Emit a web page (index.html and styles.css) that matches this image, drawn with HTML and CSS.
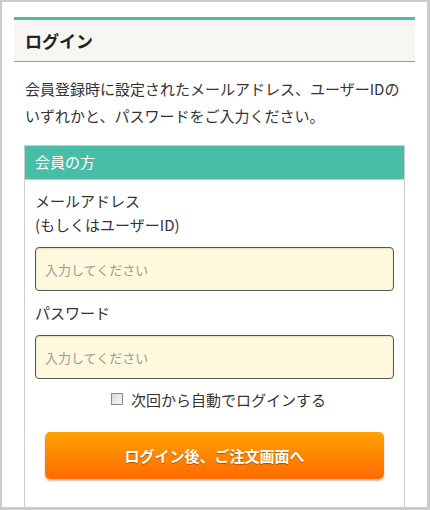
FILE: index.html
```html
<!DOCTYPE html>
<html lang="ja">
<head>
<meta charset="utf-8">
<link rel="stylesheet" href="styles.css">
</head>
<body>
<div class="frame">
  <section class="login">
    <h2 class="title">ログイン</h2>
    <p class="intro">会員登録時に設定されたメールアドレス、ユーザーIDのいずれかと、パスワードをご入力ください。</p>
    <div class="box">
      <div class="box-head">会員の方</div>
      <div class="box-body">
        <label class="label">メールアドレス<br>(もしくはユーザーID)</label>
        <input class="field" type="text" placeholder="入力してください">
        <label class="label">パスワード</label>
        <input class="field" type="password" placeholder="入力してください">
        <div class="remember"><span class="check"></span><span>次回から自動でログインする</span></div>
        <button class="btn" type="button">ログイン後、ご注文画面へ</button>
      </div>
    </div>
  </section>
</div>
</body>
</html>
```
FILE: styles.css
```css
html, body { margin: 0; padding: 0; background: #fff; }
body { font-family: "Noto Sans CJK JP", "Noto Sans", sans-serif; color: #333; }
.frame {
  box-sizing: border-box;
  width: 430px;
  height: 510px;
  border: 2px solid #cccccc;
  border-right-width: 3px;
  border-bottom-width: 3px;
  padding: 15px 12px 0 12px;
  overflow: hidden;
}
.title {
  margin: 0;
  border-top: 3px solid #48bea6;
  border-bottom: 1px solid #999;
  background: #f7f6f2;
  font-size: 17px;
  font-weight: bold;
  color: #222;
  height: 41px;
  line-height: 42px;
  padding: 0 11px;
}
.intro {
  margin: 13px 0 0 0;
  padding: 0 11px;
  font-size: 15px;
  line-height: 27px;
  color: #333;
}
.box {
  margin: 16px 10px 0 10px;
  border: 1px solid #cccccc;
  border-bottom: none;
}
.box-head {
  background: #48bea6;
  color: #fff;
  font-size: 15px;
  height: 33px;
  line-height: 31px;
  padding: 0 10px;
  border-bottom: 1px solid #cccccc;
}
.box-body {
  padding: 9px 10px 30px 10px;
  display: flex;
  flex-direction: column;
}
.label {
  font-size: 15px;
  line-height: 24px;
  color: #333;
  margin-bottom: 10px;
}
.field {
  box-sizing: border-box;
  height: 44px;
  width: 100%;
  background: #fef9dc;
  border: 1px solid #555;
  border-radius: 4px;
  box-shadow: inset 0 1px 2px rgba(0,0,0,0.12);
  padding: 0 9px;
  font-family: "Noto Sans CJK JP", sans-serif;
  font-size: 13px;
  margin-bottom: 10px;
}
.field::placeholder { color: #999; }
.remember {
  display: flex;
  align-items: center;
  justify-content: center;
  gap: 8px;
  font-size: 15px;
  color: #333;
  height: 24px;
  margin-top: -2px;
  padding-left: 8px;
}
.check {
  width: 10px;
  height: 10px;
  border: 1px solid #8a8a8a;
  background: linear-gradient(135deg, #d8d8d8, #fafafa);
}
.btn {
  margin: 21px 10px 0 10px;
  height: 47px;
  border: none;
  border-radius: 5px;
  background: linear-gradient(#ffa300, #ff6a00);
  box-shadow: 0 2px 2px rgba(0,0,0,0.25);
  color: #fff;
  font-family: "Noto Sans CJK JP", sans-serif;
  font-weight: bold;
  font-size: 15px;
  text-shadow: 0 1px 1px rgba(0,0,0,0.35);
}
```
